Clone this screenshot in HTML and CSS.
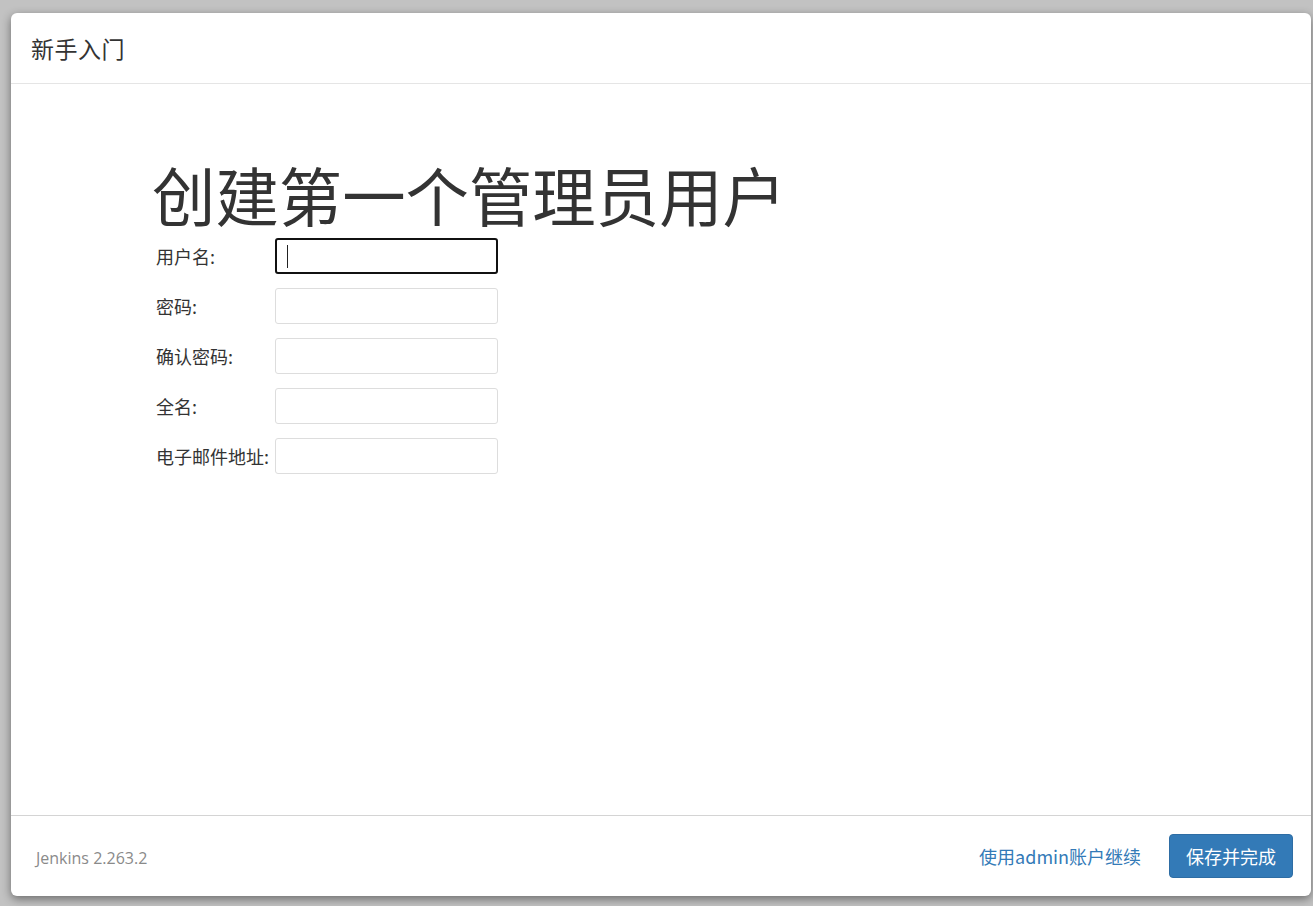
FILE: index.html
```html
<!DOCTYPE html>
<html lang="zh-CN">
<head>
<meta charset="utf-8">
<title>新手入门</title>
<link rel="stylesheet" href="styles.css">
</head>
<body>
<div class="modal">
  <div class="modal-header">
    <h4 class="modal-title">新手入门</h4>
  </div>
  <div class="modal-body">
    <h1 class="page-title">创建第一个管理员用户</h1>
    <form class="user-form">
      <div class="row">
        <label class="label">用户名:</label>
        <div class="field focused"><span class="caret"></span></div>
      </div>
      <div class="row">
        <label class="label">密码:</label>
        <div class="field"></div>
      </div>
      <div class="row">
        <label class="label">确认密码:</label>
        <div class="field"></div>
      </div>
      <div class="row">
        <label class="label">全名:</label>
        <div class="field"></div>
      </div>
      <div class="row">
        <label class="label">电子邮件地址:</label>
        <div class="field"></div>
      </div>
    </form>
  </div>
  <div class="modal-footer">
    <div class="version">Jenkins 2.263.2</div>
    <div class="actions">
      <a class="skip-link" href="#">使用admin账户继续</a>
      <button class="btn-primary" type="button">保存并完成</button>
    </div>
  </div>
</div>
</body>
</html>
```

FILE: styles.css
```css
html, body {
  margin: 0;
  padding: 0;
  height: 100%;
}
body {
  background: #c2c2c2;
  font-family: "Noto Sans CJK SC", "Open Sans", "Liberation Sans", sans-serif;
  color: #333;
  padding: 13px 2px 10px 11px;
  box-sizing: border-box;
  overflow: hidden;
}
.modal {
  background: #fff;
  width: 1300px;
  height: 883px;
  border-radius: 6px;
  box-shadow: 0 3px 10px rgba(0,0,0,.45);
  display: flex;
  flex-direction: column;
  overflow: hidden;
}
.modal-header {
  height: 70px;
  border-bottom: 1px solid #e5e5e5;
  display: flex;
  align-items: center;
  padding: 0 20px;
  flex: none;
}
.modal-title {
  margin: 0;
  font-size: 23px;
  font-weight: normal;
  color: #333;
  letter-spacing: 0.5px;
}
.modal-body {
  flex: 1;
  padding: 0 0 0 141px;
}
.page-title {
  margin: 69px 0 0 0;
  font-size: 63.4px;
  line-height: 80px;
  font-weight: normal;
  color: #333;
  height: 80px;
}
.user-form {
  margin: 5px 0 0 4px;
  display: flex;
  flex-direction: column;
  gap: 14px;
}
.row {
  display: flex;
  align-items: center;
  height: 36px;
}
.label {
  width: 119px;
  font-size: 18px;
  color: #333;
  white-space: nowrap;
}
.field {
  width: 221px;
  height: 34px;
  border: 1px solid #ddd;
  border-radius: 3px;
  position: relative;
}
.field.focused {
  width: 219px;
  height: 32px;
  border: 2px solid #111;
}
.caret {
  position: absolute;
  left: 10px;
  top: 5px;
  width: 1px;
  height: 23px;
  background: #222;
}
.modal-footer {
  height: 81px;
  flex: none;
  border-top: 1px solid #d4d4d4;
  box-sizing: border-box;
  display: flex;
  align-items: center;
  justify-content: space-between;
  padding: 0 18px 0 25px;
}
.version {
  font-family: "Open Sans", "Noto Sans", sans-serif;
  font-size: 16px;
  color: #8a8a8a;
  margin-top: 4px;
}
.actions {
  display: flex;
  align-items: center;
  gap: 28px;
}
.skip-link {
  color: #337ab7;
  text-decoration: none;
  font-size: 18px;
}
.btn-primary {
  background: #337ab7;
  color: #fff;
  border: 1px solid #2e6da4;
  border-radius: 4px;
  height: 44px;
  padding: 0 16px;
  font-family: "Noto Sans CJK SC", sans-serif;
  font-size: 18px;
}
```
